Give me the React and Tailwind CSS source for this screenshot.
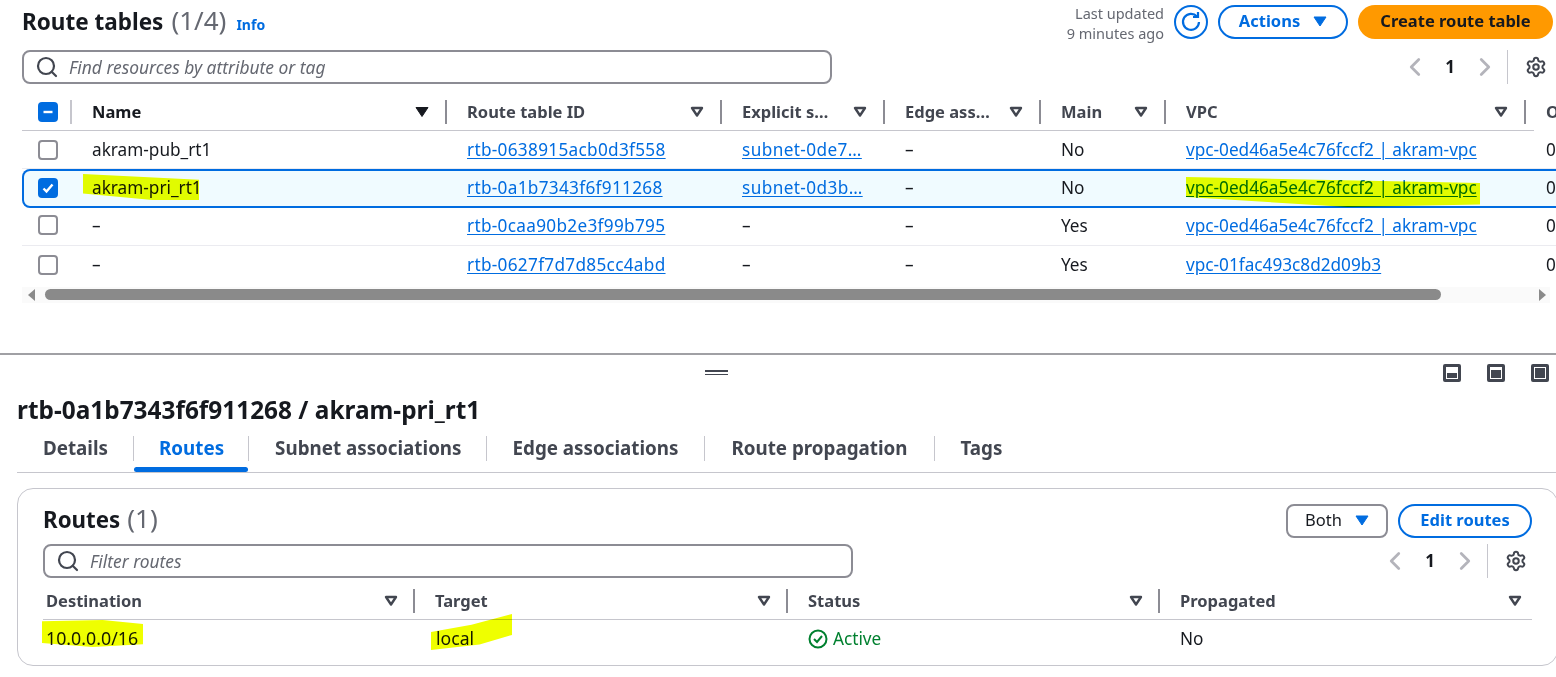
import { Search, Settings, ChevronLeft, ChevronRight } from "lucide-react";

const ROWS = [
  { name: "akram-pub_rt1", id: "rtb-0638915acb0d3f558", subnet: "subnet-0de7…", edge: "–", main: "No", vpc: "vpc-0ed46a5e4c76fccf2 | akram-vpc" },
  { name: "akram-pri_rt1", id: "rtb-0a1b7343f6f911268", subnet: "subnet-0d3b…", edge: "–", main: "No", vpc: "vpc-0ed46a5e4c76fccf2 | akram-vpc", selected: true, lift: true },
  { name: "–", id: "rtb-0caa90b2e3f99b795", subnet: "–", edge: "–", main: "Yes", vpc: "vpc-0ed46a5e4c76fccf2 | akram-vpc", lift: true },
  { name: "–", id: "rtb-0627f7d7d85cc4abd", subnet: "–", edge: "–", main: "Yes", vpc: "vpc-01fac493c8d2d09b3" },
];

const COLS = "grid grid-cols-[50px_375px_275px_163px_156px_125px_360px_60px] items-center";
const ROUTE_COLS = "grid grid-cols-[372px_373px_372px_1fr] items-center";

const TABS = [
  { label: "Details", pad: "pl-[26px] pr-[25px]" },
  { label: "Routes", pad: "pl-[25px] pr-[24px]" },
  { label: "Subnet associations", pad: "pl-[26px] pr-[24px]" },
  { label: "Edge associations", pad: "px-[26px]" },
  { label: "Route propagation", pad: "px-[26px]" },
  { label: "Tags", pad: "px-[26px]" },
];

function SortIcon({ filled }) {
  return (
    <svg width="14" height="12" viewBox="0 0 14 12" className="shrink-0">
      {filled ? (
        <path d="M1 1.5h12L7 10.5z" fill="#16191f" stroke="#16191f" strokeLinejoin="round" />
      ) : (
        <path d="M2 2h10L7 9.5z" fill="none" stroke="#424650" strokeWidth="2.4" strokeLinejoin="round" />
      )}
    </svg>
  );
}

function CaretDown() {
  return (
    <svg width="14" height="11" viewBox="0 0 14 11" className="shrink-0">
      <path d="M1 1h12L7 10z" fill="#006ce0" stroke="#006ce0" strokeLinejoin="round" />
    </svg>
  );
}

function HeadCell({ label, filled, sep = true, active }) {
  return (
    <div className={`h-[24px] pl-5 pr-4 flex items-center justify-between ${sep ? "border-r-2 border-[#8c8c94]" : ""}`}>
      <span className={`truncate font-bold ${active ? "text-[#16191f]" : "text-[#424650]"}`}>{label}</span>
      <SortIcon filled={filled} />
    </div>
  );
}

function CheckBox({ checked, mixed }) {
  if (mixed || checked) {
    return (
      <div className="w-5 h-5 rounded-[4px] bg-[#006ce0] flex items-center justify-center">
        <svg width="14" height="14" viewBox="0 0 14 14">
          {mixed ? (
            <path d="M2.5 7h9" stroke="#fff" strokeWidth="2.4" />
          ) : (
            <path d="M2.5 7.5l3 3 6-7" stroke="#fff" strokeWidth="2.4" fill="none" />
          )}
        </svg>
      </div>
    );
  }
  return <div className="w-5 h-5 rounded-[4px] border-2 border-[#8c8c94] bg-white" />;
}

function Pager() {
  return (
    <div className="flex items-center text-[#16191f]">
      <ChevronLeft size={30} strokeWidth={2.2} className="text-[#b4b4bb]" />
      <span className="font-bold text-center w-[40px] text-[17px]">1</span>
      <ChevronRight size={30} strokeWidth={2.2} className="text-[#b4b4bb]" />
      <div className="h-[34px] w-px bg-[#c6c6cd] ml-[7px] mr-[17px]" />
      <Settings size={22} strokeWidth={2.2} className="text-[#424650]" />
    </div>
  );
}

function PanelIcon({ fill }) {
  return (
    <div className="w-[18px] h-[18px] border-[3px] border-[#424650] rounded-[2px] p-px flex flex-col justify-end bg-white">
      <div className={`bg-[#424650] ${fill}`} />
    </div>
  );
}

function Mark({ className, points }) {
  return (
    <svg className={`absolute z-20 mix-blend-multiply ${className}`} viewBox="0 0 100 100" preserveAspectRatio="none">
      <polygon points={points} fill="#efff00" />
    </svg>
  );
}

export default function App() {
  return (
    <div className="w-[1556px] h-[677px] overflow-hidden bg-white text-[#16191f] text-[16.5px] font-['Noto_Sans','Open_Sans',sans-serif] relative">
      {/* Route tables */}
      <div className="pl-[22px] pt-[3px]">
        <div className="flex items-start justify-between pr-[3px] h-[43px]">
          <div className="flex items-baseline -mt-px">
            <h1 className="text-[22.5px] font-bold leading-[36px]">Route tables</h1>
            <span className="text-[26px] leading-[36px] text-[#656871] ml-[8px]">(1/4)</span>
            <a className="text-[14px] font-bold text-[#006ce0] ml-[10px]">Info</a>
          </div>
          <div className="flex items-center -mt-[3px]">
            <div className="text-right text-[14.5px] leading-[19.5px] text-[#656871] mr-[10px] mt-[4px]">
              <div>Last updated</div>
              <div>9 minutes ago</div>
            </div>
            <div className="w-[34px] h-[34px] rounded-full border-2 border-[#006ce0] flex items-center justify-center mr-[10px]">
              <svg width="22" height="22" viewBox="0 0 22 22" fill="none" stroke="#006ce0" strokeWidth="2.2">
                <path d="M17 5.5A8 8 0 1 0 19 11" />
                <path d="M13 6h5V1" />
              </svg>
            </div>
            <button className="h-[34px] w-[130px] rounded-full border-2 border-[#006ce0] text-[#006ce0] font-bold flex items-center justify-center gap-[13px] mr-[10px]">
              Actions
              <CaretDown />
            </button>
            <button className="h-[34px] w-[195px] rounded-full bg-[#ff9900] font-bold">Create route table</button>
          </div>
        </div>

        <div className="flex items-center justify-between pr-[9px] h-[34px] mt-[4px]">
          <div className="w-[810px] h-[34px] rounded-[8px] border-2 border-[#8c8c94] flex items-center pl-[11px] gap-[10px]">
            <Search size={24} strokeWidth={2.2} className="text-[#424650]" />
            <span className="italic text-[17.4px] text-[#656871]">Find resources by attribute or tag</span>
          </div>
          <Pager />
        </div>

        {/* Table */}
        <div className="mt-[12px] w-[1600px]">
          <div className={`${COLS} h-[35px] pb-[2px] border-b border-[#c6c6cd] w-[1512px]`}>
            <div className="h-[24px] pl-4 flex items-center border-r-2 border-[#c6c6cd]">
              <CheckBox mixed />
            </div>
            <HeadCell label="Name" filled active />
            <HeadCell label="Route table ID" />
            <HeadCell label="Explicit s…" />
            <HeadCell label="Edge ass…" />
            <HeadCell label="Main" />
            <HeadCell label="VPC" />
            <div className="pl-5 font-bold text-[#424650]">Owner</div>
          </div>
          {ROWS.map((row) => (
            <div
              key={row.id}
              className={`${COLS} h-[38.4px] text-[17.2px] ${row.lift ? "pb-[2px]" : ""} ${
                row.selected
                  ? "relative z-10 rounded-[8px] bg-[#f0fbff] shadow-[inset_0_0_0_2px_#006ce0]"
                  : "border-b border-[#ebebf0] last:border-b-0"
              }`}
            >
              <div className="pl-4">
                <CheckBox checked={row.selected} />
              </div>
              <div className="pl-5 truncate">{row.name}</div>
              <a className="pl-5 tracking-[0.3px]">
                <span className="text-[#006ce0] underline underline-offset-2">{row.id}</span>
              </a>
              {row.subnet === "–" ? (
                <div className="pl-5">–</div>
              ) : (
                <a className="pl-5 truncate tracking-[0.4px]">
                  <span className="text-[#006ce0] underline underline-offset-2">{row.subnet}</span>
                </a>
              )}
              <div className="pl-5">{row.edge}</div>
              <div className="pl-5">{row.main}</div>
              <a className="pl-5">
                <span className="text-[#006ce0] underline underline-offset-2">{row.vpc}</span>
              </a>
              <div className="pl-5">0</div>
            </div>
          ))}
        </div>
      </div>

      {/* Scrollbar */}
      <div className="mt-[2px] ml-[22px] mr-[6px] h-4 bg-[#fafafa] flex items-center">
        <svg width="10" height="12" viewBox="0 0 10 12" className="ml-[5px]"><path d="M8 0v12L1 6z" fill="#8a8a8a" /></svg>
        <div className="ml-[8px] w-[1396px] h-[11px] rounded-full bg-[#8a8a8a]" />
        <svg width="10" height="12" viewBox="0 0 10 12" className="ml-auto mr-[3px]"><path d="M2 0v12l7-6z" fill="#8a8a8a" /></svg>
      </div>

      {/* Split handle */}
      <div className="mt-[50px] h-[2px] bg-[#a0a0a4]" />
      <div className="flex items-center h-[36px] relative">
        <div className="ml-[705px] flex flex-col gap-[2px]">
          <div className="w-[23px] h-[1.5px] bg-[#424650]" />
          <div className="w-[23px] h-[1.5px] bg-[#424650]" />
        </div>
        <div className="absolute right-[7px] top-[9px] flex gap-[26px]">
          <PanelIcon fill="h-[5px]" />
          <PanelIcon fill="h-[8px]" />
          <PanelIcon fill="h-full" />
        </div>
      </div>

      {/* Detail panel */}
      <div className="pl-[17px]">
        <h2 className="text-[24.4px] font-bold leading-[36px] mt-[1px]">rtb-0a1b7343f6f911268 / akram-pri_rt1</h2>
        <div className="flex items-start h-[43px] pt-[6px] mt-[2px] border-b border-[#c6c6cd] font-bold text-[#424650] text-[18.8px]">
          {TABS.map((tab, i) => (
            <div
              key={tab.label}
              className={`h-[25px] flex items-center ${tab.pad} ${i < TABS.length - 1 ? "border-r border-[#c6c6cd]" : ""} ${
                tab.label === "Routes" ? "text-[#006ce0] relative" : ""
              }`}
            >
              {tab.label}
              {tab.label === "Routes" && <div className="absolute left-0 right-0 top-[31px] h-[5px] rounded-full bg-[#006ce0]" />}
            </div>
          ))}
        </div>

        <div className="mt-[15px] w-[1541px] h-[178px] rounded-[16px] border border-[#c6c6cd] pl-[25px] pr-[25px] pt-[15px]">
          <div className="flex items-start justify-between h-[34px]">
            <div className="flex items-baseline -mt-[4px]">
              <h3 className="text-[22.3px] font-bold leading-[36px]">Routes</h3>
              <span className="text-[26px] leading-[36px] text-[#656871] ml-[7px]">(1)</span>
            </div>
            <div className="flex items-center gap-[10px]">
              <div className="h-[34px] w-[102px] rounded-[8px] border-2 border-[#8c8c94] flex items-center justify-center gap-[13px]">
                Both
                <CaretDown />
              </div>
              <button className="h-[34px] w-[134px] rounded-full border-2 border-[#006ce0] text-[#006ce0] font-bold">Edit routes</button>
            </div>
          </div>
          <div className="flex items-center justify-between h-[34px] mt-[6px] pr-[5px]">
            <div className="w-[810px] h-[34px] rounded-[8px] border-2 border-[#8c8c94] flex items-center pl-[11px] gap-[10px]">
              <Search size={24} strokeWidth={2.2} className="text-[#424650]" />
              <span className="italic text-[17.4px] text-[#656871]">Filter routes</span>
            </div>
            <Pager />
          </div>
          <div className={`${ROUTE_COLS} h-[33px] mt-[9px] border-b border-[#c6c6cd] pb-[3px]`}>
            <RouteHead label="Destination" first />
            <RouteHead label="Target" />
            <RouteHead label="Status" />
            <RouteHead label="Propagated" last />
          </div>
          <div className={`${ROUTE_COLS} h-[38px] text-[17.2px]`}>
            <div className="pl-[3px] text-[17.8px]">10.0.0.0/16</div>
            <div className="pl-[21px] text-[17.6px]">local</div>
            <div className="pl-5 flex items-center gap-[5px] text-[#00802f]">
              <svg width="20" height="20" viewBox="0 0 20 20" fill="none" stroke="#00802f" strokeWidth="2">
                <circle cx="10" cy="10" r="8.5" />
                <path d="M6 10l3 3 5-6" />
              </svg>
              Active
            </div>
            <div className="pl-5">No</div>
          </div>
        </div>
      </div>

      {/* Yellow marker strokes */}
      <Mark className="left-[83px] top-[174px] w-[116px] h-[26px]" points="0,0 100,22 100,100 60,100 0,75" />
      <Mark className="left-[1186px] top-[177px] w-[294px] h-[30px]" points="0,0 100,20 100,92 55,100 0,67" />
      <Mark className="left-[42px] top-[620px] w-[101px] h-[27px]" points="0,5 60,0 100,15 100,90 50,100 0,85" />
      <Mark className="left-[431px] top-[614px] w-[81px] h-[36px]" points="100,0 100,58 60,85 0,100 0,50 50,30" />
    </div>
  );
}

function RouteHead({ label, first, last }) {
  return (
    <div className={`h-[24px] flex items-center justify-between font-bold text-[#424650] ${first ? "pl-[3px]" : "pl-5"} ${last ? "pr-[10px]" : "pr-[15px] border-r-2 border-[#8c8c94]"}`}>
      {label}
      <SortIcon />
    </div>
  );
}
